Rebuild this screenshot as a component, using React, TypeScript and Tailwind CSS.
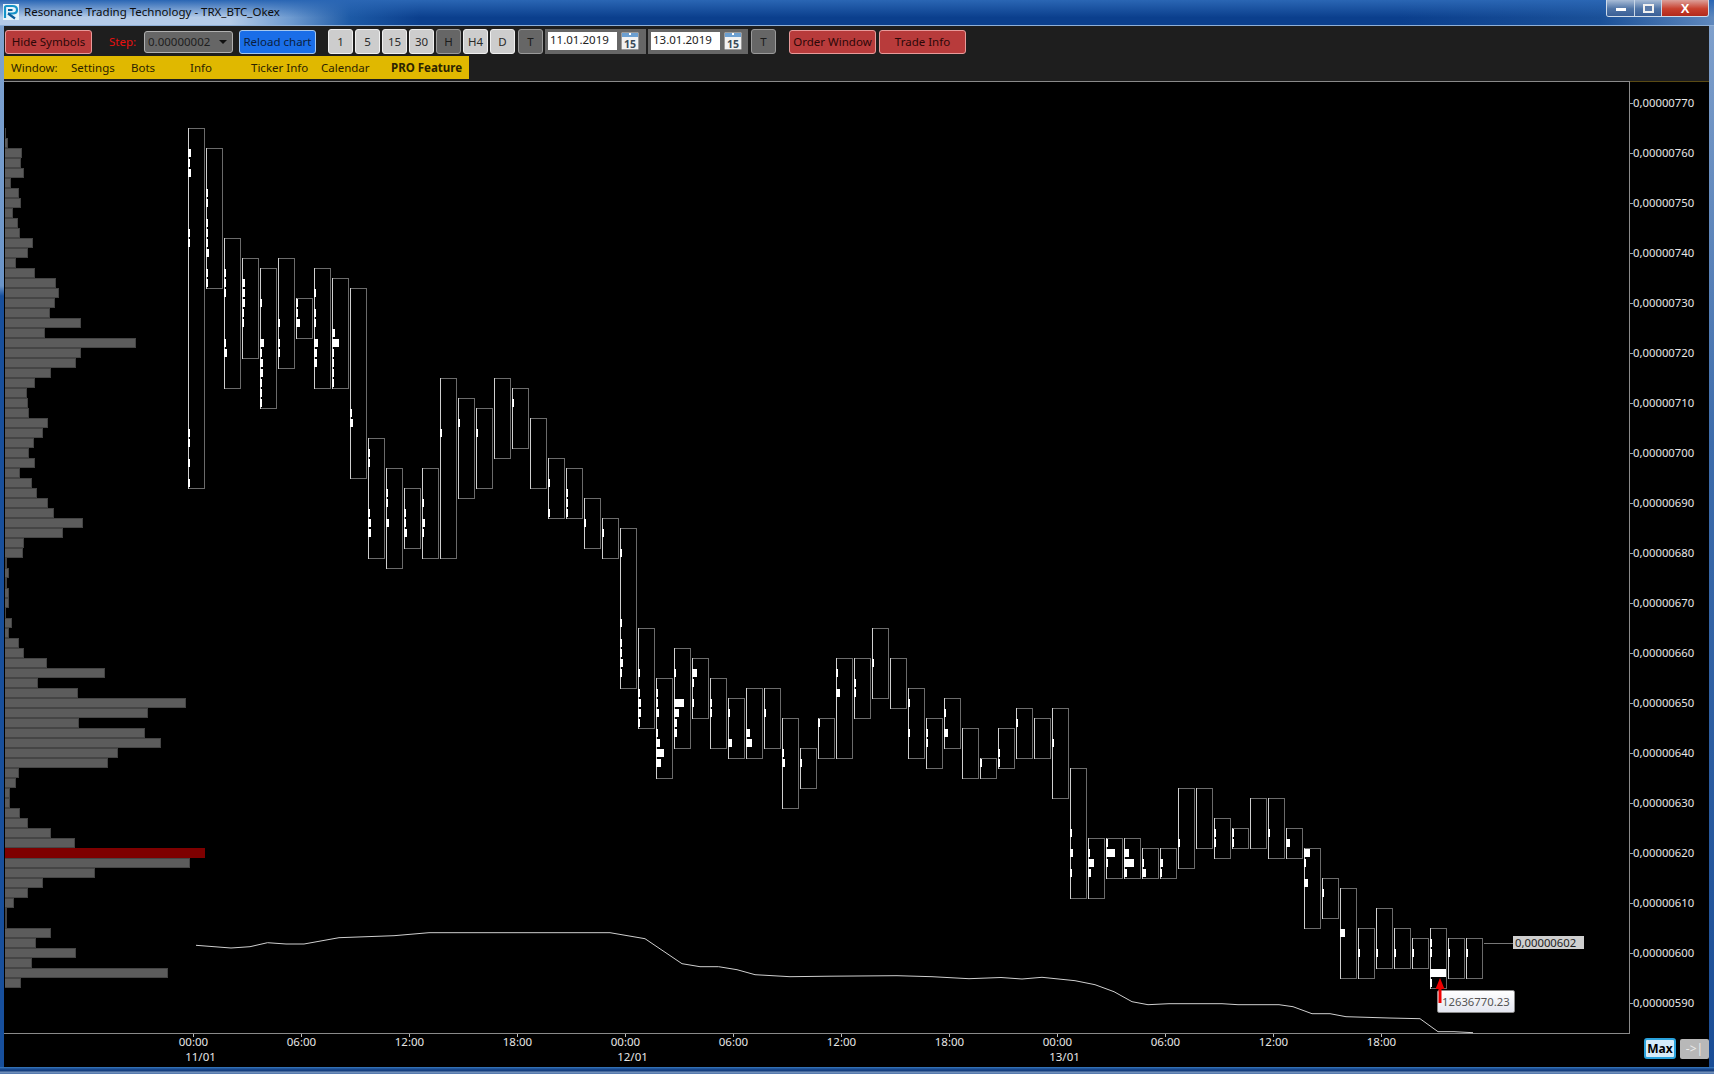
import React from "react";

const FONT = "[font-family:'Noto_Sans','Open_Sans',sans-serif]";

const candles: [number, number][] = [
  [128,488],[148,288],[238,388],[258,358],[268,408],[258,368],[298,338],[268,388],[278,388],[288,478],
  [438,558],[468,568],[488,548],[468,558],[378,558],[398,498],[408,488],[378,458],[388,448],[418,488],
  [458,518],[468,518],[498,548],[518,558],[528,688],[628,728],[678,778],[648,748],[658,718],[678,748],
  [698,758],[688,758],[688,748],[718,808],[748,788],[718,758],[658,758],[658,718],[628,698],[658,708],
  [688,758],[718,768],[698,748],[728,778],[758,778],[728,768],[708,758],[718,758],[708,798],[768,898],
  [838,898],[838,878],[838,878],[848,878],[848,878],[788,868],[788,848],[818,858],[828,848],[798,848],
  [798,858],[828,858],[848,928],[878,918],[888,978],[928,978],[908,968],[928,968],[938,968],[928,988],
  [938,978],[938,978],
];

const ticks: [number, number, number][][] = [
  [[0,148,3],[0,158,2],[0,168,3],[0,228,2],[0,238,2],[0,428,2],[0,438,2],[0,458,2],[0,478,2]],
  [[1,188,2],[1,198,2],[1,218,2],[1,228,2],[1,238,2],[1,248,3],[1,268,2],[1,278,2]],
  [[2,268,2],[2,278,2],[2,288,2],[2,338,2],[2,348,3]],
  [[3,278,3],[3,288,3],[3,298,3],[3,308,2],[3,318,2]],
  [[4,298,2],[4,338,4],[4,348,2],[4,358,3],[4,368,3],[4,378,2],[4,388,2],[4,398,2]],
  [[5,318,2],[5,338,2],[5,348,2]],
  [[6,298,2],[6,308,2],[6,318,4]],
  [[7,288,2],[7,308,2],[7,318,2],[7,338,4],[7,348,3],[7,358,3]],
  [[8,328,3],[8,338,7],[8,348,2],[8,358,2],[8,368,2],[8,378,2]],
  [[9,408,2],[9,418,3]],
  [[10,448,2],[10,458,2],[10,508,2],[10,518,3],[10,528,3]],
  [[11,488,2],[11,498,2],[11,518,3]],
  [[12,508,2],[12,518,2],[12,528,3]],
  [[13,498,2],[13,518,3],[13,528,2]],
  [[14,428,2]],[[15,418,2]],[[16,428,2]],[[18,398,2]],
  [[20,478,2],[20,508,2]],
  [[21,488,2],[21,498,2],[21,508,2]],
  [[22,518,2]],[[23,528,2]],
  [[24,548,2],[24,618,2],[24,638,2],[24,648,2],[24,658,3],[24,668,2]],
  [[25,668,2],[25,688,2],[25,698,3],[25,708,3],[25,718,2]],
  [[26,688,2],[26,698,2],[26,708,3],[26,728,2],[26,738,4],[26,748,8],[26,758,5]],
  [[27,668,2],[27,698,10],[27,708,5],[27,718,3],[27,728,3]],
  [[28,668,5],[28,678,2],[28,698,2]],
  [[29,698,2],[29,708,2]],
  [[30,708,2],[30,738,4]],
  [[31,728,4],[31,738,6]],
  [[32,708,2]],
  [[33,748,2],[33,758,3]],
  [[34,758,2]],[[35,718,2]],
  [[36,668,2],[36,688,4]],
  [[37,678,2],[37,688,2]],
  [[38,658,2]],
  [[40,698,2],[40,728,2]],
  [[41,728,2],[41,738,2]],
  [[42,708,2],[42,728,4]],
  [[44,758,2]],
  [[45,748,2],[45,758,2]],
  [[46,718,2]],[[48,738,2]],
  [[49,828,2],[49,848,3],[49,868,2]],
  [[50,848,2],[50,858,6],[50,868,3]],
  [[51,838,2],[51,848,9],[51,858,2]],
  [[52,848,5],[52,858,10],[52,868,3]],
  [[53,858,2],[53,868,4]],
  [[54,858,3],[54,868,2]],
  [[55,838,2]],
  [[57,828,2],[57,838,2]],
  [[58,828,2],[58,838,2]],
  [[60,828,2]],[[61,838,4]],
  [[62,848,6],[62,858,2],[62,878,4]],
  [[63,888,2]],[[64,928,5]],[[65,948,2]],[[66,948,2]],[[67,948,2]],[[68,948,2]],
  [[69,938,2],[69,948,2],[69,968,16],[69,978,2]],
  [[70,948,2]],[[71,948,2]],
];

const volumes = [
  6,8,22,21,24,11,19,21,13,18,20,33,28,16,35,56,59,55,50,81,45,136,81,76,51,35,27,28,29,48,43,34,29,35,20,32,37,48,54,83,
  63,24,23,7,9,7,9,9,6,12,9,19,24,47,105,38,78,186,148,79,145,161,118,108,19,16,10,10,20,28,51,75,205,190,95,43,28,14,7,7,51,36,76,32,168,21,
];

const curve =
  "196,945.3 231,948 250,946.7 267.5,942.7 286,944 304,944 339,937.7 394,935.7 429,932.7 610,932.7 645,938.7 682,963.7 700,966.7 718.6,966.7 737,969.7 755,974.7 790,976.7 830,976.2 897,975.7 932,976.7 969,978.7 1001,977.5 1022,979 1042,977.3 1075,980.7 1095,984.7 1114,991.7 1132,1001.7 1148,1004.7 1169,1003.7 1222,1003.7 1238,1004.7 1279,1004.7 1293,1006.7 1312,1013.7 1330,1013.7 1346,1016.7 1389,1018 1420,1018.7 1438,1031.7 1454,1031.7 1473,1032.7";

const prices = ["770","760","750","740","730","720","710","700","690","680","670","660","650","640","630","620","610","600","590"];
const times = ["00:00","06:00","12:00","18:00","00:00","06:00","12:00","18:00","00:00","06:00","12:00","18:00"];
const dates = ["11/01","12/01","13/01"];

function Logo() {
  return (
    <svg width="16" height="16" viewBox="0 0 16 16" className="shrink-0">
      <rect width="16" height="16" fill="#e8f4fa" />
      <path d="M2 14V3.5C2 2.5 2.6 2 3.5 2H9.5C12.5 2 14 3.5 14 5.7C14 8 12.5 9.5 9.5 9.5H5" fill="none" stroke="#1593c8" strokeWidth="2.2" />
      <path d="M5 6H9.5M5 9.5L12 14.5" fill="none" stroke="#0c5e9c" strokeWidth="2.2" />
    </svg>
  );
}

function CalendarIcon() {
  return (
    <svg width="18" height="18" viewBox="0 0 18 18" className="shrink-0">
      <rect x="0.5" y="0.5" width="17" height="17" rx="1" fill="#f2f2f2" stroke="#9a9a9a" />
      <rect x="1" y="1" width="16" height="4" fill="#6c9fd0" />
      <rect x="8" y="1" width="2" height="2" fill="#ffffff" />
      <text x="9" y="15.5" textAnchor="middle" fontSize="10.5" fontWeight="700" fill="#3a4a58" fontFamily="'Noto Sans',sans-serif">15</text>
    </svg>
  );
}

function Chart() {
  return (
    <svg width="1705" height="986" viewBox="4 81 1705 986" className="block" fontFamily="'Noto Sans','Open Sans',sans-serif">
      <rect x="4" y="81" width="1705" height="986" fill="#000000" />
      <g shapeRendering="crispEdges">
        <rect x="4" y="81" width="1625" height="1" fill="#8a8a8a" />
        <rect x="1630" y="81" width="79" height="1" fill="#5a4a14" />
        <rect x="1629" y="81" width="1" height="953" fill="#8a8a8a" />
        <rect x="4" y="1033" width="1626" height="1" fill="#8a8a8a" />
        {volumes.map((w, i) => {
          const y = 128 + i * 10;
          const red = y === 848;
          return (
            <rect key={i} x={5} y={y} width={Math.max(w - 5, 1)} height={10} fill={red ? "#7e0000" : "#454545"} />
          );
        })}
        {volumes.map((w, i) => {
          const y = 128 + i * 10;
          if (y === 848 || w < 8) return null;
          return <rect key={i} x={5} y={y + 1} width={w - 6} height={8} fill="#5c5c5c" />;
        })}
        {candles.map(([top, bottom], i) => {
          const x = 188 + i * 18;
          return (
            <g key={i}>
              <rect x={x + 0.5} y={top + 0.5} width={16} height={bottom - top} fill="none" stroke="#6a6a6a" />
              <rect x={x} y={top} width={1} height={bottom - top + 1} fill="#cfcfcf" />
            </g>
          );
        })}
        {ticks.flat().map(([c, y, w], i) => (
          <rect key={i} x={188 + c * 18} y={y + 1} width={w} height={8} fill="#ffffff" />
        ))}
        <rect x="1484" y="943" width="29" height="1" fill="#777777" />
        {prices.map((p, i) => (
          <rect key={p} x="1630" y={103 + i * 50} width="3" height="1" fill="#aaaaaa" />
        ))}
        {times.map((t, i) => (
          <rect key={i} x={193 + i * 108} y="1034" width="1" height="3" fill="#bbbbbb" />
        ))}
      </g>
      <polyline points={curve} fill="none" stroke="#d0d0d0" strokeWidth="1" />
      {prices.map((p, i) => (
        <text key={p} x="1633" y={107 + i * 50} fontSize="11.3" fill="#e6e6e6">{`0,00000${p}`}</text>
      ))}
      {times.map((t, i) => (
        <text key={i} x={193.5 + i * 108} y="1046" fontSize="11.5" textAnchor="middle" fill="#e6e6e6">{t}</text>
      ))}
      {dates.map((d, i) => (
        <text key={d} x={200.5 + i * 432} y="1061" fontSize="11.5" textAnchor="middle" fill="#e6e6e6">{d}</text>
      ))}
    </svg>
  );
}

function TfButton({ label, dark }: { label: string; dark?: boolean }) {
  return (
    <div
      className={
        dark
          ? "w-[25px] h-[25px] flex items-center justify-center rounded-[3px] border border-[#9a9a9a] bg-[#666666] text-[#1c1c1c]"
          : "w-[25px] h-[25px] flex items-center justify-center rounded-[3px] border border-[#f0f0f0] bg-[#cdcdcd] text-[#2a2a2a]"
      }
    >
      {label}
    </div>
  );
}

function RedButton({ label, w }: { label: string; w: string }) {
  return (
    <div className={`${w} h-[24px] flex items-center justify-center rounded-[3px] border border-[#e89a9a] bg-[#b83b3b] text-[#2c0808]`}>
      {label}
    </div>
  );
}

function DateBox({ value, w }: { value: string; w: string }) {
  return (
    <div className={`${w} h-[25px] bg-[#666666] flex items-start pt-[3px] pl-[3px] gap-[4px]`}>
      <div className="w-[69px] h-[18px] bg-white text-[#222222] pl-[2px] leading-[16px]">{value}</div>
      <CalendarIcon />
    </div>
  );
}

export default function App() {
  return (
    <div className={`w-[1714px] h-[1074px] flex flex-col overflow-hidden bg-[#0d3f8c] text-[11.5px] ${FONT}`}>
      {/* Title bar */}
      <div className="h-[26px] shrink-0 flex items-start bg-[linear-gradient(180deg,#2a66b4_0%,#2a66b400_70%),linear-gradient(90deg,#b4cbe8_0px,#b4cbe8_230px,#6f9bd0_290px,#1d5aa6_350px,#0b3f8d_420px,#0b3f8d_1400px,#1a5098_1600px,#5f88bd_1714px)] border-b border-[#8fb0d8]">
        <div className="pl-[3px] pt-[4px] flex items-center gap-[5px]">
          <Logo />
          <span className="text-[#0c0c0c] leading-[16px] whitespace-nowrap">Resonance Trading Technology - TRX_BTC_Okex</span>
        </div>
        <div className="ml-auto mr-[5px] flex h-[17px] rounded-b-[3px] border border-t-0 border-[#d0dcea] overflow-hidden">
          <div className="w-[28px] flex items-center justify-center border-r border-[#c8d6e6] bg-[linear-gradient(180deg,#a8bcd6,#4f74a6_55%,#3a5f96)]">
            <div className="w-[10px] h-[3px] bg-white mt-[3px]" />
          </div>
          <div className="w-[27px] flex items-center justify-center border-r border-[#c8d6e6] bg-[linear-gradient(180deg,#a8bcd6,#4f74a6_55%,#3a5f96)]">
            <div className="w-[11px] h-[9px] border-2 border-[#f0f0f0] bg-[#5a7aa8]" />
          </div>
          <div className="w-[46px] flex items-center justify-center bg-[linear-gradient(180deg,#dca09a,#c8402e_55%,#b22a1c)] text-white font-bold text-[13px] leading-none [font-family:'Liberation_Sans',sans-serif]">
            X
          </div>
        </div>
      </div>

      <div className="flex flex-1 min-h-0">
        <div className="w-[4px] shrink-0 bg-[linear-gradient(180deg,#7fa3d0_0px,#6a94c8_260px,#174f9c_270px,#174f9c_100%)]" />
        <div className="w-[1705px] shrink-0 flex flex-col">
          {/* Toolbar */}
          <div className="h-[55px] shrink-0 bg-[#1e1e1e] flex flex-col">
            <div className="flex items-center h-[25px] mt-[3px] pl-[1px]">
              <RedButton label="Hide Symbols" w="w-[87px]" />
              <span className="ml-[17px] w-[27px] text-[#e81010] whitespace-nowrap">Step:</span>
              <div className="ml-[8px] w-[89px] h-[22px] rounded-[3px] border border-[#b0b0b0] bg-[#666666] text-[#1e1e1e] flex items-center pl-[3px]">
                0.00000002
                <span className="ml-auto mr-[5px] w-0 h-0 border-x-[4px] border-x-transparent border-t-[4px] border-t-[#111111]" />
              </div>
              <div className="ml-[6px] w-[77px] h-[24px] flex items-center justify-center rounded-[3px] border border-[#a6c8ee] bg-[#1a6ee8] text-[#0a1e40]">
                Reload chart
              </div>
              <div className="ml-[12px] flex gap-[2px]">
                {["1", "5", "15", "30"].map((t) => (
                  <TfButton key={t} label={t} />
                ))}
                <TfButton label="H" dark />
                <TfButton label="H4" />
                <TfButton label="D" />
                <div className="ml-[1px]">
                  <TfButton label="T" dark />
                </div>
              </div>
              <div className="ml-[2px] flex gap-[2px]">
                <DateBox value="11.01.2019" w="w-[101px]" />
                <DateBox value="13.01.2019" w="w-[100px]" />
              </div>
              <div className="ml-[3px]">
                <TfButton label="T" dark />
              </div>
              <div className="ml-[13px] flex gap-[3px]">
                <RedButton label="Order Window" w="w-[87px]" />
                <RedButton label="Trade Info" w="w-[87px]" />
              </div>
            </div>
            <div className="mt-[2px] h-[23px] w-[465px] bg-[#e0b800] text-[#2c2400] flex items-center">
              <span className="ml-[7px] w-[60px]">Window:</span>
              <span className="w-[60px]">Settings</span>
              <span className="w-[59px]">Bots</span>
              <span className="w-[61px]">Info</span>
              <span className="w-[70px]">Ticker Info</span>
              <span className="w-[70px]">Calendar</span>
              <span className="font-bold whitespace-nowrap">PRO Feature</span>
            </div>
          </div>
          {/* Chart */}
          <div className="relative flex-1 min-h-0 bg-black">
            <Chart />
            <div className="absolute left-[1509px] top-[855px] w-[71px] h-[13px] bg-[#cfcfcf] text-[#1e1e1e] text-[11.3px] leading-[13px] pl-[2px]">
              0,00000602
            </div>
            <div className="absolute left-[1433px] top-[909px] w-[78px] h-[23px] rounded-[2px] border border-[#8a8a8a] bg-[linear-gradient(180deg,#ffffff,#e4e6f0)] text-[#555555] text-[11.3px] leading-[21px] pl-[4px]">
              12636770.23
            </div>
            <svg width="10" height="26" viewBox="0 0 10 26" className="absolute left-[1431px] top-[897px]">
              <path d="M5 0L9.5 11H6.5V25H3.5V11H0.5Z" fill="#f00000" />
            </svg>
            <div className="absolute left-[1640px] top-[957px] w-[32px] h-[21px] rounded-[3px] border-2 border-[#2aa2dc] bg-[#d6ecfa] text-black font-bold text-[12px] flex items-center justify-center">
              Max
            </div>
            <div className="absolute left-[1676px] top-[958px] w-[29px] h-[20px] rounded-[2px] bg-[#b8b8b8] text-[#ececec] text-[12px] flex items-center justify-center">
              {"->|"}
            </div>
          </div>
        </div>
        <div className="w-[5px] shrink-0 bg-[linear-gradient(180deg,#7fa0cc,#3d6cab_40%,#1a4d96)]" />
      </div>

      {/* Bottom border */}
      <div className="h-[7px] shrink-0 bg-[linear-gradient(180deg,#3a7cc0_0px,#1a4a90_2px,#123a78_4px,#7a98c0_5px,#4a70a8_7px)]" />
    </div>
  );
}
